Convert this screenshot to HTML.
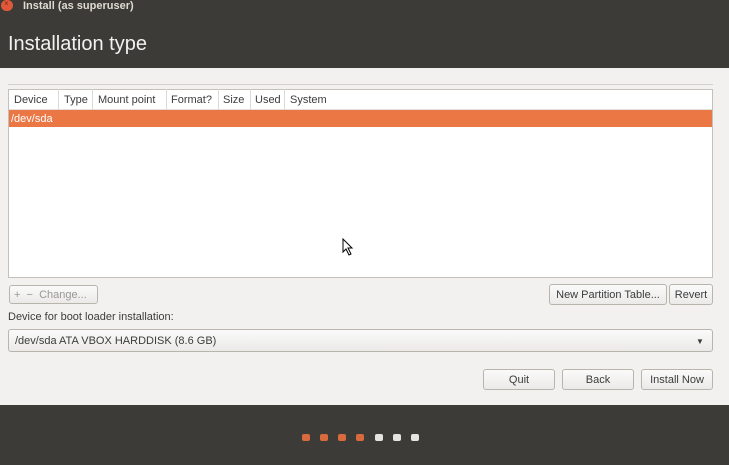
<!DOCTYPE html>
<html><head><style>
*{margin:0;padding:0;box-sizing:border-box}
body{width:729px;height:465px;background:#f2f1f0;font-family:"Liberation Sans",sans-serif;font-size:11px;color:#3c3c3c;position:relative;overflow:hidden}
.abs{position:absolute}
.top{left:0;top:0;width:729px;height:68px;background:#3c3b37}
.foot{left:0;top:405px;width:729px;height:60px;background:#3c3b37}
.btn{position:absolute;border:1px solid #b8b5ad;border-radius:3px;background:linear-gradient(#fafafa,#ebeae8);text-align:center;color:#3c3c3c;font-size:11px}
.dot{position:absolute;top:434px;width:8px;height:7px;border-radius:2px}
.h{position:absolute;top:94px;font-size:11px;color:#3c3c3c}
.sep{position:absolute;top:89px;width:1px;height:21px;background:#dcdad5}
</style></head><body>
<div class="abs top"></div>
<div class="abs" style="left:1px;top:0;width:12px;height:11px;border-radius:6px;background:#e0583a"></div>
<div class="abs" style="left:4px;top:-1px;color:#7a2a1a;font-size:8px">×</div>
<div class="abs" style="left:23px;top:0px;color:#dfdbd2;font-size:11px;font-weight:bold">Install (as superuser)</div>
<div class="abs" style="left:8px;top:33px;color:#f2f1f0;font-size:20px">Installation type</div>
<div class="abs" style="left:8px;top:84px;width:705px;height:1px;background:#d4d1cc"></div>
<div class="abs" style="left:8px;top:89px;width:705px;height:189px;background:#fff;border:1px solid #c4c1bb"></div>
<div class="abs" style="left:9px;top:90px;width:703px;height:20px;background:#fff;border-bottom:1px solid #e2e0dc"></div>
<div class="h" style="left:14px">Device</div><div class="sep" style="left:58px"></div>
<div class="h" style="left:64px">Type</div><div class="sep" style="left:92px"></div>
<div class="h" style="left:98px">Mount point</div><div class="sep" style="left:166px"></div>
<div class="h" style="left:171px">Format?</div><div class="sep" style="left:218px"></div>
<div class="h" style="left:223px">Size</div><div class="sep" style="left:250px"></div>
<div class="h" style="left:255px">Used</div><div class="sep" style="left:284px"></div>
<div class="h" style="left:290px">System</div>
<div class="abs" style="left:9px;top:110px;width:703px;height:17px;background:#ea7744;color:#fff;padding:3px 0 0 2px">/dev/sda</div>
<svg class="abs" style="left:342px;top:238px" width="12" height="18"><path d="M1 1 L1 14 L4 11 L7 17 L9 16 L6 10 L10 10 Z" fill="#fff" stroke="#000" stroke-width="1"/></svg>
<div class="btn" style="left:9px;top:285px;width:89px;height:19px;color:#9a9894;text-align:left;padding:3px 0 0 4px">+&nbsp;&nbsp;−&nbsp;&nbsp;Change...</div>
<div class="btn" style="left:549px;top:284px;width:118px;height:21px;line-height:20px">New Partition Table...</div>
<div class="btn" style="left:669px;top:284px;width:44px;height:21px;line-height:20px">Revert</div>
<div class="abs" style="left:8px;top:311px">Device for boot loader installation:</div>
<div class="btn" style="left:8px;top:329px;width:705px;height:23px;text-align:left;padding:5px 0 0 6px">/dev/sda ATA VBOX HARDDISK (8.6 GB)</div>
<div class="abs" style="left:696px;top:337px;font-size:8px">▼</div>
<div class="btn" style="left:483px;top:369px;width:72px;height:21px;line-height:20px">Quit</div>
<div class="btn" style="left:562px;top:369px;width:72px;height:21px;line-height:20px">Back</div>
<div class="btn" style="left:641px;top:369px;width:72px;height:21px;line-height:20px">Install Now</div>
<div class="abs foot"></div>
<div class="dot" style="left:302px;background:#d86a3e"></div>
<div class="dot" style="left:320px;background:#d86a3e"></div>
<div class="dot" style="left:338px;background:#d86a3e"></div>
<div class="dot" style="left:356px;background:#d86a3e"></div>
<div class="dot" style="left:375px;background:#e6e4e0"></div>
<div class="dot" style="left:393px;background:#e6e4e0"></div>
<div class="dot" style="left:411px;background:#e6e4e0"></div>
</body></html>
